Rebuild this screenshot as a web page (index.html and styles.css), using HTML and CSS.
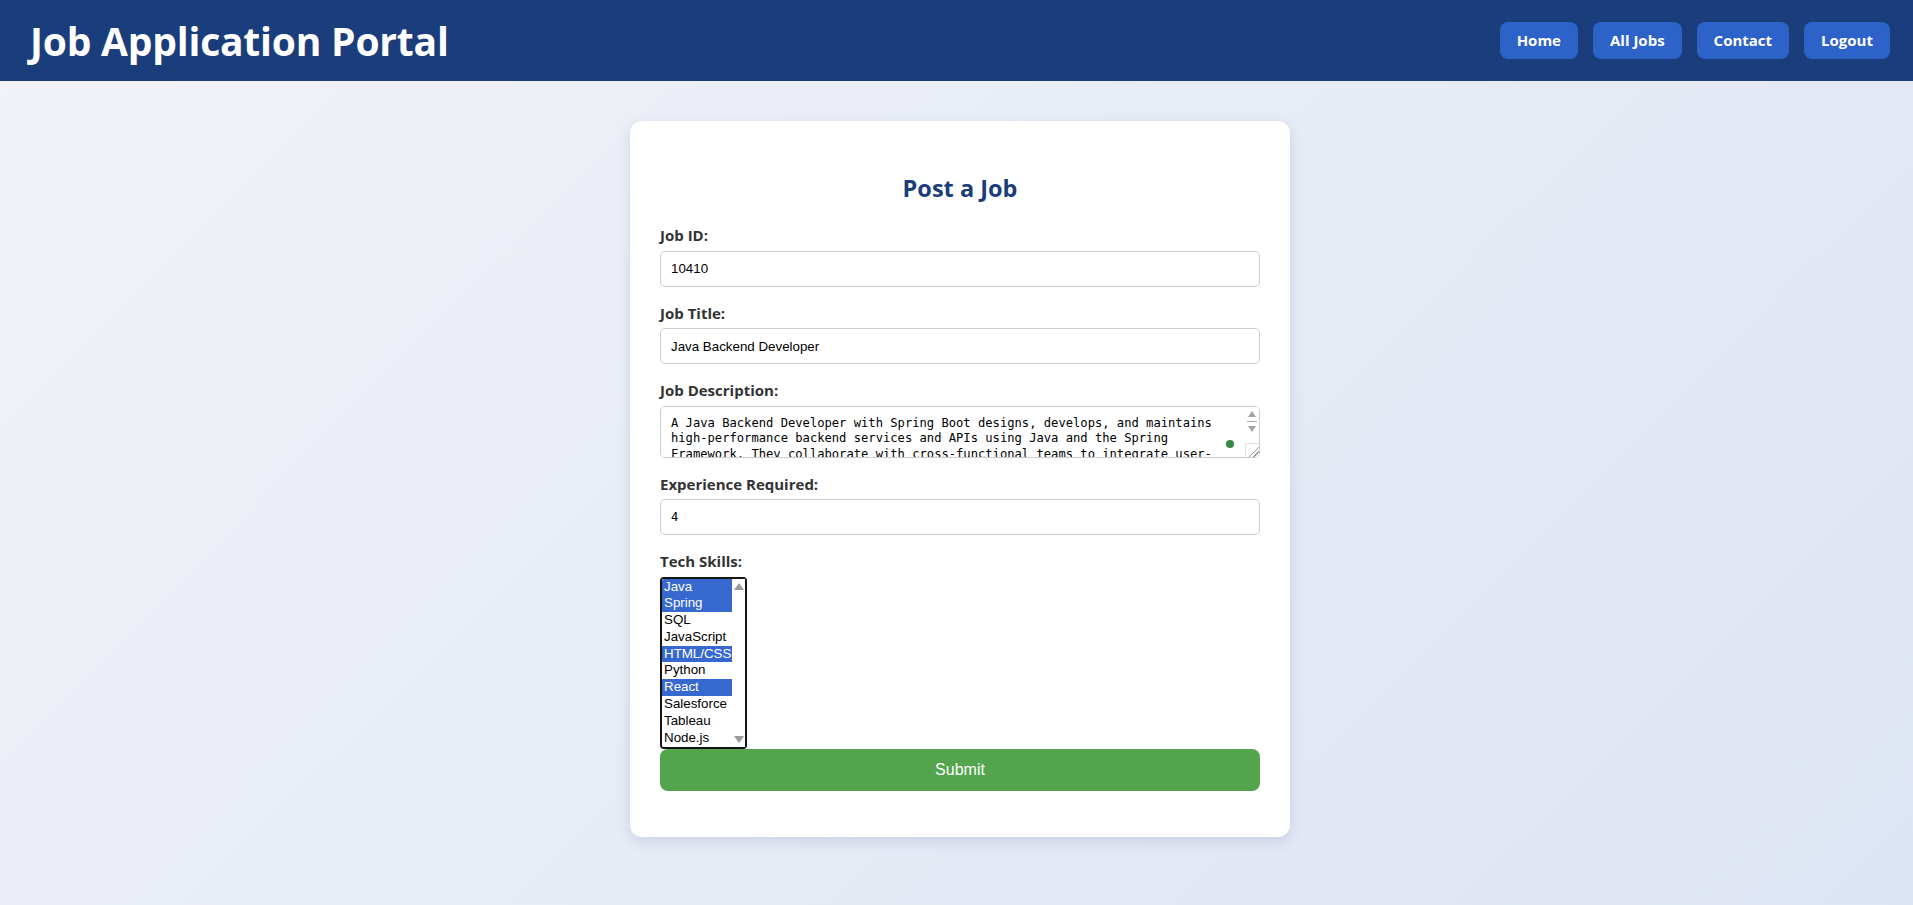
FILE: index.html
```html
<!DOCTYPE html>
<html lang="en">
<head>
<meta charset="utf-8">
<title>Job Application Portal</title>
<link rel="stylesheet" href="styles.css">
</head>
<body>
<header class="topbar">
  <h1 class="brand">Job Application Portal</h1>
  <nav class="nav">
    <a class="nav-btn" href="#">Home</a>
    <a class="nav-btn" href="#">All Jobs</a>
    <a class="nav-btn" href="#">Contact</a>
    <a class="nav-btn" href="#">Logout</a>
  </nav>
</header>
<main class="main">
  <section class="card">
    <h2 class="card-title">Post a Job</h2>
    <form class="job-form">
      <label class="field-label" for="jobId">Job ID:</label>
      <input class="field" id="jobId" type="text" value="10410">

      <label class="field-label" for="jobTitle">Job Title:</label>
      <input class="field" id="jobTitle" type="text" value="Java Backend Developer">

      <label class="field-label" for="jobDesc">Job Description:</label>
      <div class="desc-wrap">
        <textarea class="field desc" id="jobDesc">A Java Backend Developer with Spring Boot designs, develops, and maintains high-performance backend services and APIs using Java and the Spring Framework. They collaborate with cross-functional teams to integrate user-facing elements with server-side logic, ensure the performance, quality, and responsiveness of applications, and write clean, maintainable, and efficient code. Responsibilities include designing RESTful services, working with relational databases, and participating in code reviews.</textarea>
        <div class="fake-scroll desc-scroll">
          <span class="arrow arrow-up"></span>
          <span class="thumb-dash"></span>
          <span class="arrow arrow-down"></span>
          <span class="grip"></span>
        </div>
        <span class="assist-dot"></span>
      </div>

      <label class="field-label" for="exp">Experience Required:</label>
      <input class="field exp" id="exp" type="text" value="4">

      <label class="field-label" for="skills">Tech Skills:</label>
      <div class="skills-wrap">
        <select class="skills" id="skills" multiple size="10">
          <option selected>Java</option>
          <option selected>Spring</option>
          <option>SQL</option>
          <option>JavaScript</option>
          <option selected>HTML/CSS</option>
          <option>Python</option>
          <option selected>React</option>
          <option>Salesforce</option>
          <option>Tableau</option>
          <option>Node.js</option>
          <option>AWS</option>
          <option>Docker</option>
        </select>
        <div class="fake-scroll skills-scroll">
          <span class="arrow arrow-up big"></span>
          <span class="arrow arrow-down big"></span>
        </div>
      </div>

      <button class="submit" type="button">Submit</button>
    </form>
  </section>
</main>
</body>
</html>
```

FILE: styles.css
```css
html, body {
  margin: 0;
  padding: 0;
}

body {
  min-height: 905px;
  background: linear-gradient(135deg, #f1f3f8 0%, #dde4f3 100%);
  font-family: "Open Sans", "Noto Sans", sans-serif;
}

.topbar {
  height: 81px;
  box-sizing: border-box;
  padding: 0 23px 0 30px;
  background: #1a3d7c;
  display: flex;
  align-items: center;
  justify-content: space-between;
}

.brand {
  margin: 0;
  color: #ffffff;
  font-size: 39px;
  font-weight: 700;
  line-height: 1;
  letter-spacing: -0.2px;
}

.nav {
  display: flex;
  gap: 15px;
}

.nav-btn {
  display: block;
  height: 37px;
  box-sizing: border-box;
  padding: 0 17px;
  line-height: 37px;
  background: #2d62c8;
  color: #ffffff;
  font-size: 15px;
  font-weight: 700;
  text-decoration: none;
  border-radius: 8px;
}

.main {
  padding: 40px 0 60px 7px;
  display: flex;
  justify-content: center;
}

.card {
  width: 660px;
  box-sizing: border-box;
  padding: 31px 30px 30px;
  background: #ffffff;
  border-radius: 12px;
  box-shadow: 0 4px 14px rgba(40, 60, 110, 0.14);
}

.card-title {
  margin: 20px 0;
  text-align: center;
  color: #1a3d7c;
  font-size: 23.5px;
  font-weight: 700;
  line-height: 33px;
}

.job-form {
  margin: 0 0 16px;
}

.field-label {
  display: block;
  margin: 16px 0 5px;
  color: #333333;
  font-size: 15px;
  font-weight: 700;
  line-height: 20.5px;
}

.field {
  display: block;
  width: 100%;
  height: 36px;
  box-sizing: border-box;
  margin: 0;
  padding: 0 10px;
  border: 1px solid #cccccc;
  border-radius: 5px;
  background: #ffffff;
  color: #000000;
  font-family: "Liberation Sans", Arial, sans-serif;
  font-size: 13.33px;
}

.exp {
  font-family: "DejaVu Sans Mono", monospace;
  font-size: 12.2px;
}

.desc-wrap {
  position: relative;
}

.desc {
  height: 52px;
  padding: 9px 24px 8px 10px;
  resize: none;
  font-family: "DejaVu Sans Mono", "Liberation Mono", monospace;
  font-size: 12.15px;
  line-height: 15.5px;
  overflow-y: scroll;
  scrollbar-width: none;
}

.fake-scroll {
  position: absolute;
  background: #ffffff;
  display: flex;
  flex-direction: column;
  align-items: center;
}

.desc-scroll {
  top: 1px;
  right: 1px;
  bottom: 1px;
  width: 14px;
  border-top-right-radius: 4px;
  border-bottom-right-radius: 4px;
}

.arrow {
  display: block;
  width: 0;
  height: 0;
  border-left: 4.5px solid transparent;
  border-right: 4.5px solid transparent;
}

.arrow-up {
  border-bottom: 6px solid #a3a3a3;
}

.arrow-down {
  border-top: 6px solid #a3a3a3;
}

.arrow.big {
  border-left-width: 5px;
  border-right-width: 5px;
}

.arrow-up.big {
  border-bottom: 7px solid #9b9b9b;
}

.arrow-down.big {
  border-top: 7px solid #9b9b9b;
}

.desc-scroll .arrow-up {
  margin-top: 4px;
}

.thumb-dash {
  display: block;
  width: 10px;
  height: 1px;
  margin-top: 4px;
  background: #a8a8a8;
}

.desc-scroll .arrow-down {
  margin-top: 4px;
}

.grip {
  display: block;
  margin-top: auto;
  width: 14px;
  height: 14px;
  box-sizing: border-box;
  border-top: 1px solid #e2e2e2;
  border-left: 1px solid #e2e2e2;
  background:
    linear-gradient(135deg, transparent 58%, #9a9a9a 58%, #9a9a9a 64%, transparent 64%, transparent 76%, #9a9a9a 76%, #9a9a9a 82%, transparent 82%);
}

.assist-dot {
  position: absolute;
  right: 26px;
  top: 34px;
  width: 8px;
  height: 8px;
  border-radius: 50%;
  background: #3a8a45;
}

.skills-wrap {
  position: relative;
  width: 87px;
}

.skills {
  display: block;
  width: 87px;
  height: 172px;
  box-sizing: border-box;
  margin: 0;
  padding: 0;
  border: 2px solid #141414;
  border-radius: 4px;
  background: #ffffff;
  color: #000000;
  font-family: "Liberation Sans", Arial, sans-serif;
  font-size: 13.33px;
  outline: none;
  overflow-y: scroll;
  scrollbar-width: none;
}

.skills option {
  padding: 0 2px;
  line-height: 16.8px;
  height: 16.8px;
}

.skills option:checked {
  background: linear-gradient(#3768d0, #3768d0);
  color: #ffffff;
}

.skills-scroll {
  top: 2px;
  right: 2px;
  bottom: 2px;
  width: 13px;
  justify-content: space-between;
  padding: 4px 0 4px;
  box-sizing: border-box;
}

.submit {
  display: block;
  width: 100%;
  height: 42px;
  margin: 0;
  border: none;
  border-radius: 8px;
  background: #53a44c;
  color: #ffffff;
  font-family: "Liberation Sans", Arial, sans-serif;
  font-size: 16px;
  cursor: pointer;
}
```
